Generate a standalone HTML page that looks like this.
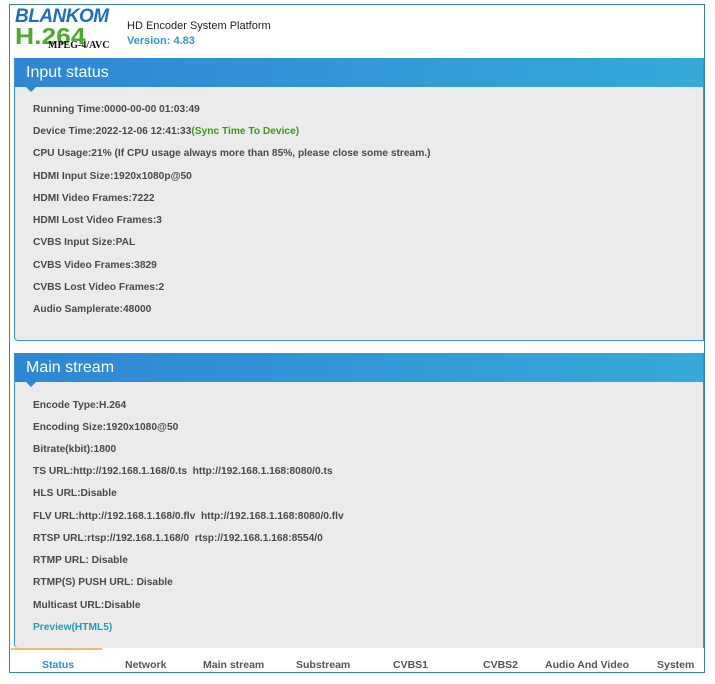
<!DOCTYPE html>
<html><head><style>
*{margin:0;padding:0;box-sizing:border-box}
body{width:715px;height:684px;background:#fff;position:relative;overflow:hidden;font-family:"Liberation Sans",sans-serif}
.frame{position:absolute;left:9px;top:4px;width:696px;height:669px;border:1px solid #3d7db6;background:#fff}
.panel{position:absolute;left:14px;width:690px;background:#ebebeb;border:1px solid #3a93d0;border-top:none;border-radius:0 0 0 4px}
.hd{position:absolute;left:0;top:0;right:0;height:29px;background:linear-gradient(90deg,#2f86d4,#35aad8);color:#fff;font-size:16px;padding:6px 0 0 11px}
.hd:after{content:"";position:absolute;left:11px;bottom:-5px;border-left:5px solid transparent;border-right:5px solid transparent;border-top:5px solid #2f86d4}
.ln{position:absolute;left:33px;font-size:10.2px;font-weight:bold;color:#4a4a4a;white-space:nowrap}
.tabs{position:absolute;left:10px;top:648px;width:694px;height:24px;background:#fff;font-size:10.5px;font-weight:bold;color:#555}
.tabs span{position:absolute;top:11px;white-space:nowrap}
</style></head><body>
<div class="frame"></div>
<div style="position:absolute;left:15px;top:6px;font:italic bold 19px 'Liberation Sans',sans-serif;color:#1f6fb8;letter-spacing:-0.5px">BLANKOM</div>
<div style="position:absolute;left:15px;top:23px;font:bold 23px 'Liberation Sans',sans-serif;color:#4fa830;transform:scaleX(1.15);transform-origin:left">H.264</div>
<div style="position:absolute;left:48px;top:40px;font:bold 10px 'Liberation Serif',serif;color:#111">MPEG-4/AVC</div>
<div style="position:absolute;left:127px;top:20px;font-size:11px;color:#222">HD Encoder System Platform</div>
<div style="position:absolute;left:127px;top:35px;font-size:11px;color:#3296d8;font-weight:bold">Version: 4.83</div>

<div class="panel" style="top:58px;height:283px"><div class="hd">Input status</div></div>
<div class="ln" style="top:104px">Running Time:0000-00-00 01:03:49</div>
<div class="ln" style="top:126px">Device Time:2022-12-06 12:41:33<span style="color:#3a9a1a">(Sync Time To Device)</span></div>
<div class="ln" style="top:148px">CPU Usage:21% (If CPU usage always more than 85%, please close some stream.)</div>
<div class="ln" style="top:171px">HDMI Input Size:1920x1080p@50</div>
<div class="ln" style="top:193px">HDMI Video Frames:7222</div>
<div class="ln" style="top:215px">HDMI Lost Video Frames:3</div>
<div class="ln" style="top:237px">CVBS Input Size:PAL</div>
<div class="ln" style="top:260px">CVBS Video Frames:3829</div>
<div class="ln" style="top:282px">CVBS Lost Video Frames:2</div>
<div class="ln" style="top:304px">Audio Samplerate:48000</div>

<div class="panel" style="top:353px;height:295px;border-bottom:none"><div class="hd">Main stream</div></div>
<div class="ln" style="top:400px">Encode Type:H.264</div>
<div class="ln" style="top:422px">Encoding Size:1920x1080@50</div>
<div class="ln" style="top:444px">Bitrate(kbit):1800</div>
<div class="ln" style="top:466px">TS URL:http://192.168.1.168/0.ts&nbsp; http://192.168.1.168:8080/0.ts</div>
<div class="ln" style="top:488px">HLS URL:Disable</div>
<div class="ln" style="top:511px">FLV URL:http://192.168.1.168/0.flv&nbsp; http://192.168.1.168:8080/0.flv</div>
<div class="ln" style="top:533px">RTSP URL:rtsp://192.168.1.168/0&nbsp; rtsp://192.168.1.168:8554/0</div>
<div class="ln" style="top:555px">RTMP URL: Disable</div>
<div class="ln" style="top:577px">RTMP(S) PUSH URL: Disable</div>
<div class="ln" style="top:600px">Multicast URL:Disable</div>
<div class="ln" style="top:622px;color:#2a9ab0">Preview(HTML5)</div>

<div class="tabs">
<div style="position:absolute;left:1px;top:0;width:91px;height:2px;background:#f0c060"></div>
<span style="left:32px;color:#2a8fcf">Status</span>
<span style="left:115px">Network</span>
<span style="left:193px">Main stream</span>
<span style="left:286px">Substream</span>
<span style="left:383px">CVBS1</span>
<span style="left:473px">CVBS2</span>
<span style="left:535px">Audio And Video</span>
<span style="left:647px">System</span>
</div>
</body></html>
